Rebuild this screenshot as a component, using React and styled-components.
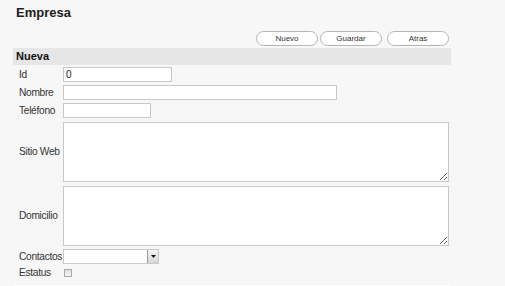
import React from "react";
import styled, { createGlobalStyle } from "styled-components";

const GlobalStyle = createGlobalStyle`
  body {
    margin: 0;
    background: #f7f7f7;
    font-family: "Liberation Sans", Arial, sans-serif;
  }
`;

const Page = styled.div`
  width: 438px;
  padding: 5px 0 0 13px;
`;

const Title = styled.h1`
  margin: 0 0 0 3px;
  font-size: 13px;
  font-weight: bold;
  color: #222;
  line-height: 15px;
`;

const Toolbar = styled.div`
  display: flex;
  justify-content: flex-end;
  gap: 2px;
  margin-top: 11px;
  padding-right: 2px;
`;

const Button = styled.button`
  width: 62px;
  height: 15px;
  margin-left: ${(p) => (p.$spaced ? "3px" : "0")};
  padding: 0;
  border: 1px solid #b5b5b5;
  border-radius: 8px;
  background: #fff;
  font-family: inherit;
  font-size: 8px;
  color: #333;
`;

const SectionHeader = styled.div`
  margin-top: 2px;
  height: 17px;
  line-height: 17px;
  padding-left: 3px;
  background: #e6e6e6;
  font-size: 11px;
  font-weight: bold;
  color: #111;
`;

const Form = styled.div`
  display: grid;
  grid-template-columns: 44px auto;
  row-gap: 3px;
  align-items: center;
  padding: 2px 0 7px 6px;
  border-bottom: 1px solid #fff;
`;

const Label = styled.label`
  font-size: 10.2px;
  color: #333;
  white-space: nowrap;
  letter-spacing: -0.3px;
`;

const Input = styled.input`
  box-sizing: border-box;
  width: ${(p) => p.$w}px;
  height: 15px;
  margin: 0;
  border: 1px solid #c9c9c9;
  background: #fff;
  font-family: inherit;
  font-size: 10px;
  padding: 0 2px;
  color: #222;
  outline: none;
`;

const TextArea = styled.textarea`
  box-sizing: border-box;
  width: 386px;
  height: 60px;
  border: 1px solid #c9c9c9;
  background: #fff;
  margin: 1px 0 0;
  display: block;
  outline: none;
`;

const Select = styled.div`
  box-sizing: border-box;
  width: 96px;
  height: 15px;
  border: 1px solid #c9c9c9;
  background: #fff;
  display: flex;
  justify-content: flex-end;
`;

const Arrow = styled.span`
  box-sizing: border-box;
  width: 11px;
  height: 13px;
  border-left: 1px solid #999;
  background: linear-gradient(#f4f4f4, #d8d8d8);
  display: flex;
  align-items: center;
  justify-content: center;
`;

const Check = styled.span`
  box-sizing: border-box;
  display: block;
  width: 8px;
  height: 8px;
  margin: 1px 0 0 1px;
  border: 1px solid #a8a8a8;
  background: linear-gradient(#dedede, #f4f4f4);
`;

export default function App() {
  return (
    <>
      <GlobalStyle />
      <Page>
        <Title>Empresa</Title>
        <Toolbar>
          <Button>Nuevo</Button>
          <Button>Guardar</Button>
          <Button $spaced>Atras</Button>
        </Toolbar>
        <SectionHeader>Nueva</SectionHeader>
        <Form>
          <Label>Id</Label>
          <Input $w={109} defaultValue="0" />
          <Label>Nombre</Label>
          <Input $w={274} />
          <Label>Teléfono</Label>
          <Input $w={88} />
          <Label>Sitio Web</Label>
          <TextArea />
          <Label>Domicilio</Label>
          <TextArea />
          <Label>Contactos</Label>
          <Select>
            <Arrow>
              <svg width="5" height="3" viewBox="0 0 5 3">
                <path d="M0 0h5L2.5 3z" fill="#111" />
              </svg>
            </Arrow>
          </Select>
          <Label>Estatus</Label>
          <Check />
        </Form>
      </Page>
    </>
  );
}
